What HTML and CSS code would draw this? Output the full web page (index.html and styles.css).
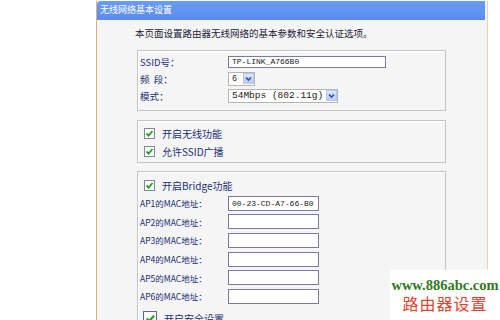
FILE: index.html
```html
<!DOCTYPE html>
<html lang="zh-CN">
<head>
  <meta charset="UTF-8" />
  <title>无线网络基本设置</title>
  <link rel="stylesheet" href="styles.css">
</head>
<body>
  <div class="panel">
    <div class="panel-title">无线网络基本设置</div>
    <div class="panel-body">
      <p class="intro">本页面设置路由器无线网络的基本参数和安全认证选项。</p>

      <div class="group">
        <div class="row">
          <label>SSID号：</label>
          <span class="field wide">TP-LINK_A766B0</span>
        </div>
        <div class="row">
          <label>频&nbsp;&nbsp;段：</label>
          <span class="select"><span class="select-val">6</span><span class="arrow"><svg width="9" height="9" viewBox="0 0 9 9"><path d="M2 3.5 L4.5 6 L7 3.5" fill="none" stroke="#2c4f9e" stroke-width="1.6"/></svg></span></span>
        </div>
        <div class="row">
          <label>模式：</label>
          <span class="select"><span class="select-val mode">54Mbps (802.11g)</span><span class="arrow"><svg width="9" height="9" viewBox="0 0 9 9"><path d="M2 3.5 L4.5 6 L7 3.5" fill="none" stroke="#2c4f9e" stroke-width="1.6"/></svg></span></span>
        </div>
      </div>

      <div class="group checks">
        <div class="check-row"><span class="cb"><svg width="9" height="9" viewBox="0 0 9 9"><path d="M1.5 4.5 L3.6 6.6 L7.5 2" fill="none" stroke="#22a022" stroke-width="1.8"/></svg></span>开启无线功能</div>
        <div class="check-row"><span class="cb"><svg width="9" height="9" viewBox="0 0 9 9"><path d="M1.5 4.5 L3.6 6.6 L7.5 2" fill="none" stroke="#22a022" stroke-width="1.8"/></svg></span>允许SSID广播</div>
      </div>

      <div class="group bridge">
        <div class="check-row"><span class="cb"><svg width="9" height="9" viewBox="0 0 9 9"><path d="M1.5 4.5 L3.6 6.6 L7.5 2" fill="none" stroke="#22a022" stroke-width="1.8"/></svg></span>开启Bridge功能</div>
        <div class="row mac"><label>AP1的MAC地址：</label><span class="field">00-23-CD-A7-66-B0</span></div>
        <div class="row mac"><label>AP2的MAC地址：</label><span class="field"></span></div>
        <div class="row mac"><label>AP3的MAC地址：</label><span class="field"></span></div>
        <div class="row mac"><label>AP4的MAC地址：</label><span class="field"></span></div>
        <div class="row mac"><label>AP5的MAC地址：</label><span class="field"></span></div>
        <div class="row mac"><label>AP6的MAC地址：</label><span class="field"></span></div>
        <div class="check-row big"><span class="cb"><svg width="11" height="11" viewBox="0 0 9 9"><path d="M1.5 4.5 L3.6 6.6 L7.5 2" fill="none" stroke="#22a022" stroke-width="1.8"/></svg></span>开启安全设置</div>
      </div>
    </div>
  </div>

  <div class="watermark">
    <div class="wm-url">www.886abc.com</div>
    <div class="wm-name">路由器设置</div>
  </div>
</body>
</html>
```

FILE: styles.css
```css
html, body {
  height: 320px;
  overflow: hidden;
}

body {
  margin: 0;
  padding-top: 1px;
  box-sizing: border-box;
  background: #fff;
  font-family: "Noto Sans CJK SC", sans-serif;
  font-size: 9.5px;
  color: #1a2f72;
}

.panel {
  margin-left: 96px;
  width: 390px;
  height: 319px;
  overflow: hidden;
  border-left: 1px solid #dcb27a;
  border-right: 1px solid #e6d3b0;
  background: #f5f5f5;
}

.panel-title {
  height: 19px;
  line-height: 18px;
  background: linear-gradient(#6a9bf4, #5a8ced);
  color: #fff;
  padding-left: 3px;
  font-size: 9px;
  border-top-left-radius: 4px;
  margin-right: 2px;
}

.panel-body {
  padding-left: 40px;
}

.intro {
  margin: 7px 0 0 -2px;
  line-height: 12px;
  color: #1b1b3a;
}

.group {
  width: 309px;
  border: 1px solid #c4c4c4;
  box-shadow: inset 1px 1px 0 #fff;
  margin-top: 11px;
  padding: 2px 0 0 2px;
  box-sizing: border-box;
}

.group:first-of-type {
  height: 61px;
}

.row {
  display: grid;
  grid-template-columns: 88px auto;
  align-items: center;
  height: 17px;
}

.row label {
  white-space: nowrap;
}

.field {
  display: block;
  width: 86px;
  height: 13px;
  border: 1px solid #7b78aa;
  background: #fff;
  font-family: "Liberation Mono", monospace;
  font-size: 8px;
  line-height: 13px;
  padding-left: 3px;
  color: #222;
}

.field.wide {
  width: 153px;
  height: 10px;
  line-height: 10px;
}

.select {
  display: inline-flex;
  align-items: center;
  border: 1px solid #b5b5b5;
  background: #fff;
  height: 12px;
  justify-self: start;
  padding-left: 3px;
}

.select-val {
  font-family: "Liberation Mono", monospace;
  font-size: 8.5px;
  color: #222;
  padding-right: 6px;
}

.select-val.mode {
  font-size: 9.5px;
  padding-right: 3px;
}

.arrow {
  display: flex;
  align-items: center;
  justify-content: center;
  width: 11px;
  height: 11px;
  background: linear-gradient(#dbe6fb, #b7cbf5);
  border: 1px solid #b9c8e6;
  box-sizing: border-box;
}

.group.checks {
  height: 43px;
  margin-top: 9px;
  padding-top: 3px;
}

.check-row {
  display: flex;
  align-items: center;
  height: 18px;
  padding-left: 4px;
  color: #1b2f78;
  font-size: 10px;
}

.cb {
  display: flex;
  align-items: center;
  justify-content: center;
  width: 9px;
  height: 9px;
  border: 1px solid #7e8a9a;
  background: #fff;
  margin-right: 7px;
}

.group.bridge {
  margin-top: 8px;
  padding-top: 5px;
  height: 200px;
}

.group.bridge .check-row {
  height: 17px;
}

.row.mac {
  height: 18.6px;
  font-size: 8.5px;
}

.check-row.big {
  margin-top: 4px;
  padding-left: 3px;
}

.check-row.big .cb {
  width: 12px;
  height: 12px;
  border: 1px solid #5e6c7e;
  margin-right: 7px;
}

.watermark {
  position: absolute;
  left: 390px;
  top: 270px;
  width: 110px;
  height: 50px;
  background: #fff;
  text-align: center;
}

.wm-url {
  margin-top: 7px;
  font-family: "Liberation Serif", serif;
  font-weight: bold;
  font-size: 14.5px;
  line-height: 16px;
  color: #2f7a22;
}

.wm-name {
  font-size: 16px;
  line-height: 20px;
  color: #e2432c;
  letter-spacing: 1px;
}
```
